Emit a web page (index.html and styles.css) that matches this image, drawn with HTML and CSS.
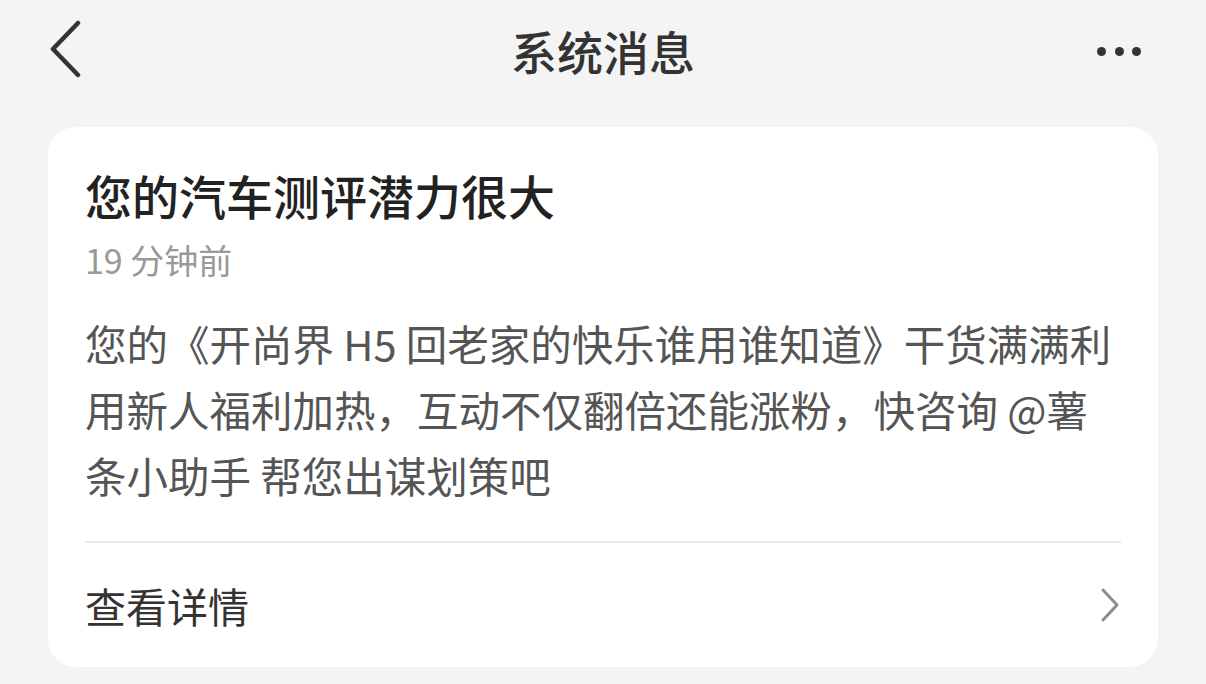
FILE: index.html
```html
<!DOCTYPE html>
<html lang="zh-CN">
  <head>
    <meta charset="UTF-8" />
    <meta name="viewport" content="width=device-width, initial-scale=1.0" />
    <title>系统消息</title>
    <link rel="stylesheet" href="styles.css">
  </head>
  <body>
    <div class="topbar">
      <button class="back-btn" aria-label="返回">
        <svg width="40" height="60" viewBox="0 0 40 60">
          <path d="M32 3 L7 29 L32 55" fill="none" stroke="#333" stroke-width="4.5" stroke-linecap="round" stroke-linejoin="round" />
        </svg>
      </button>
      <h1 class="topbar-title">系统消息</h1>
      <button class="more-btn" aria-label="更多">
        <span class="dot"></span>
        <span class="dot"></span>
        <span class="dot"></span>
      </button>
    </div>

    <div class="card">
      <h2 class="card-title">您的汽车测评潜力很大</h2>
      <div class="card-time">19 分钟前</div>
      <p class="card-text">您的《开尚界 H5 回老家的快乐谁用谁知道》干货满满利用新人福利加热，互动不仅翻倍还能涨粉，快咨询 @薯条小助手 帮您出谋划策吧</p>
      <div class="card-footer">
        <span>查看详情</span>
        <svg width="22" height="36" viewBox="0 0 22 36">
          <path d="M4 3 L18 18 L4 33" fill="none" stroke="#8c8c8c" stroke-width="3" stroke-linecap="round" stroke-linejoin="round" />
        </svg>
      </div>
    </div>
  </body>
</html>
```

FILE: styles.css
```css
body {
  margin: 0;
  background-color: #f4f4f4;
  font-family: "Noto Sans CJK SC", "Noto Sans", sans-serif;
  color: #333;
}

.topbar {
  height: 100px;
  display: grid;
  grid-template-columns: 1fr auto 1fr;
  align-items: center;
  padding: 0 65px 0 46px;
}

.back-btn,
.more-btn {
  background: none;
  border: none;
  padding: 0;
  cursor: pointer;
  display: flex;
  align-items: center;
}

.more-btn {
  justify-self: end;
  gap: 8.5px;
  padding-top: 2px;
}

.dot {
  width: 9px;
  height: 9px;
  border-radius: 50%;
  background-color: #333;
}

.topbar-title {
  margin: 0 0 0 19px;
  font-size: 46px;
  font-weight: 500;
  color: #333;
  line-height: 1;
}

.card {
  margin: 27px 48px 0;
  background-color: #fff;
  border-radius: 28px;
  padding: 36px 37px 0;
}

.card-title {
  margin: 0;
  font-size: 47px;
  line-height: 64px;
  font-weight: 500;
  color: #222;
}

.card-time {
  margin-top: 11px;
  font-size: 34px;
  line-height: 44px;
  color: #999;
}

.card-text {
  margin: 28px 0 0;
  font-size: 41.5px;
  line-height: 66px;
  color: #555;
}

.card-footer {
  margin-top: 33px;
  border-top: 2px solid #e8e8e8;
  height: 124px;
  display: flex;
  align-items: center;
  justify-content: space-between;
  font-size: 41px;
  color: #333;
}
```
